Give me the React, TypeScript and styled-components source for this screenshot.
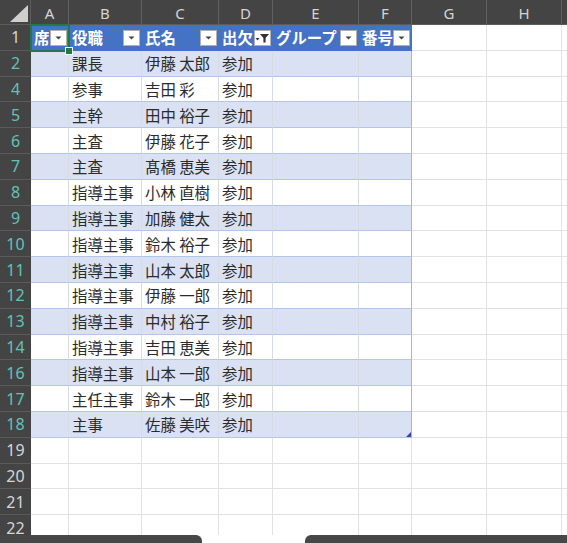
import React from 'react';
import styled, { createGlobalStyle } from 'styled-components';

const Global = createGlobalStyle`
  html, body { margin: 0; padding: 0; background: #ffffff; }
  body { font-family: "Noto Sans CJK JP", "Noto Sans", sans-serif; }
`;

const COLS = [31, 38, 73, 77, 54, 86, 53, 75, 75, 40];
const TEMPLATE = COLS.map((c) => `${c}px`).join(' ');
const LETTERS = ['A', 'B', 'C', 'D', 'E', 'F', 'G', 'H', ''];
const ROW_H = 25.8;
const TABLE_COLS = 6;

type Kind = 'head' | 'band' | 'plain' | 'empty';

const Page = styled.div`
  width: 567px;
  height: 543px;
  display: flex;
  flex-direction: column;
  overflow: hidden;
  background: #ffffff;
`;

const Viewport = styled.div`
  flex: 1;
  min-height: 0;
  overflow: hidden;
`;

const GridRow = styled.div<{ $h: number }>`
  display: grid;
  grid-template-columns: ${TEMPLATE};
  height: ${(p) => p.$h}px;
`;

const Corner = styled.div`
  background: #444444;
  border-right: 1px solid #5c5c5c;
  border-bottom: 1px solid #5c5c5c;
  display: flex;
  align-items: flex-end;
  justify-content: flex-end;
  padding: 0 2px 2px 0;
  box-sizing: border-box;
`;

const ColHead = styled.div`
  background: #444444;
  border-right: 1px solid #606060;
  border-bottom: 1px solid #5c5c5c;
  box-sizing: border-box;
  color: #d4d4d4;
  font-family: "Noto Sans", "Open Sans", sans-serif;
  font-size: 15px;
  display: flex;
  align-items: center;
  justify-content: center;
  padding-top: 1px;
`;

const RowHead = styled.div<{ $tone: 'teal' | 'gray' }>`
  background: #444444;
  border-bottom: 1px solid #5a5a5a;
  box-sizing: border-box;
  color: ${(p) => (p.$tone === 'teal' ? '#63c2b6' : '#d6d6d6')};
  font-family: "Noto Sans", "Open Sans", sans-serif;
  font-size: 16px;
  display: flex;
  align-items: center;
  justify-content: center;
`;

const bg: Record<Kind, string> = {
  head: '#4472c4',
  band: '#d9e1f2',
  plain: '#ffffff',
  empty: '#ffffff',
};

const Cell = styled.div<{ $kind: Kind; $edge?: boolean }>`
  position: relative;
  background: ${(p) => bg[p.$kind]};
  box-sizing: border-box;
  border-bottom: 1px solid
    ${(p) => (p.$kind === 'empty' ? '#e1e1e1' : p.$kind === 'head' ? '#4472c4' : '#b4c6e7')};
  border-right: 1px solid
    ${(p) =>
      p.$edge
        ? '#9fb5df'
        : p.$kind === 'head'
        ? '#4472c4'
        : p.$kind === 'empty'
        ? '#e1e1e1'
        : '#d6dbe4'};
  display: flex;
  align-items: center;
  padding-left: 3px;
  overflow: visible;
  white-space: nowrap;
  font-size: 15.4px;
  color: #2b2b2b;
`;

const HeadCell = styled(Cell)`
  justify-content: space-between;
  padding-right: 1px;
  color: #ffffff;
  font-weight: 700;
  font-size: 15.4px;
`;

const HeadText = styled.span`
  overflow: hidden;
  white-space: nowrap;
`;

const FilterBtn = styled.div`
  flex: 0 0 auto;
  width: 17px;
  height: 16px;
  margin-top: 1px;
  background: #ffffff;
  border: 1px solid #b0b0b0;
  box-sizing: border-box;
  display: flex;
  align-items: center;
  justify-content: center;
`;

const Selection = styled.div`
  position: absolute;
  z-index: 3;
  left: -1px;
  top: -1px;
  right: -2px;
  bottom: -2px;
  border: 2px solid #217a46;
  pointer-events: none;
`;

const Handle = styled.div`
  position: absolute;
  right: -5px;
  bottom: -5px;
  width: 6px;
  height: 6px;
  background: #217a46;
  border: 1px solid #ffffff;
`;

const ResizeMark = styled.svg`
  position: absolute;
  right: 0;
  bottom: 0;
`;

const BottomBar = styled.div`
  flex: 0 0 8px;
  display: flex;
  background: #ffffff;
`;

const BarSeg = styled.div<{ $w?: number; $side: 'left' | 'right' | 'gap' }>`
  ${(p) => (p.$w ? `width: ${p.$w}px;` : 'flex: 1;')}
  background: ${(p) => (p.$side === 'gap' ? '#ffffff' : '#474747')};
  border-top-right-radius: ${(p) => (p.$side === 'left' ? '6px' : '0')};
  border-top-left-radius: ${(p) => (p.$side === 'right' ? '6px' : '0')};
`;

const DropArrow = () => (
  <svg width="9" height="6" viewBox="0 0 9 6">
    <polygon points="1.5,1.5 7.5,1.5 4.5,4.5" fill="#444" />
  </svg>
);

const FunnelIcon = () => (
  <svg width="15" height="12" viewBox="0 0 15 12">
    <polygon points="0.5,6 4.5,6 2.5,8.5" fill="#333" />
    <polygon points="5,2 14,2 10.6,6 10.6,10.5 8.4,10.5 8.4,6" fill="#333" />
  </svg>
);

const headers = ['席', '役職', '氏名', '出欠', 'グループ', '番号'];

const data: [number, string, string][] = [
  [2, '課長', '伊藤 太郎'],
  [4, '参事', '吉田 彩'],
  [5, '主幹', '田中 裕子'],
  [6, '主査', '伊藤 花子'],
  [7, '主査', '髙橋 恵美'],
  [8, '指導主事', '小林 直樹'],
  [9, '指導主事', '加藤 健太'],
  [10, '指導主事', '鈴木 裕子'],
  [11, '指導主事', '山本 太郎'],
  [12, '指導主事', '伊藤 一郎'],
  [13, '指導主事', '中村 裕子'],
  [14, '指導主事', '吉田 恵美'],
  [16, '指導主事', '山本 一郎'],
  [17, '主任主事', '鈴木 一郎'],
  [18, '主事', '佐藤 美咲'],
];

const emptyRows = [19, 20, 21, 22];

export default function App() {
  return (
    <>
      <Global />
      <Page>
        <Viewport>
          <GridRow $h={25}>
            <Corner>
              <svg width="18" height="17" viewBox="0 0 18 17">
                <polygon points="0,17 18,0 18,17" fill="#cfcfcf" />
              </svg>
            </Corner>
            {LETTERS.map((l, i) => (
              <ColHead key={i}>{l}</ColHead>
            ))}
          </GridRow>

          <GridRow $h={ROW_H}>
            <RowHead $tone="gray">1</RowHead>
            {headers.map((h, i) => (
              <HeadCell key={h} $kind="head">
                <HeadText>{h}</HeadText>
                <FilterBtn>{i === 3 ? <FunnelIcon /> : <DropArrow />}</FilterBtn>
                {i === 0 && (
                  <Selection>
                    <Handle />
                  </Selection>
                )}
              </HeadCell>
            ))}
            {[0, 1, 2].map((k) => (
              <Cell key={k} $kind="empty" />
            ))}
          </GridRow>

          {data.map(([n, role, name], idx) => {
            const kind: Kind = idx % 2 === 0 ? 'band' : 'plain';
            const last = idx === data.length - 1;
            const values = ['', role, name, '参加', '', ''];
            return (
              <GridRow key={n} $h={ROW_H}>
                <RowHead $tone="teal">{n}</RowHead>
                {values.map((v, c) => (
                  <Cell key={c} $kind={kind} $edge={c === TABLE_COLS - 1}>
                    {v}
                    {last && c === TABLE_COLS - 1 && (
                      <ResizeMark width="5" height="5" viewBox="0 0 5 5">
                        <polygon points="5,0 5,5 0,5" fill="#2f45a8" />
                      </ResizeMark>
                    )}
                  </Cell>
                ))}
                {[0, 1, 2].map((k) => (
                  <Cell key={k} $kind="empty" />
                ))}
              </GridRow>
            );
          })}

          {emptyRows.map((n) => (
            <GridRow key={n} $h={ROW_H}>
              <RowHead $tone="gray">{n}</RowHead>
              {LETTERS.map((l, i) => (
                <Cell key={i} $kind="empty" />
              ))}
            </GridRow>
          ))}
        </Viewport>
        <BottomBar>
          <BarSeg $w={202} $side="left" />
          <BarSeg $w={103} $side="gap" />
          <BarSeg $side="right" />
        </BottomBar>
      </Page>
    </>
  );
}
